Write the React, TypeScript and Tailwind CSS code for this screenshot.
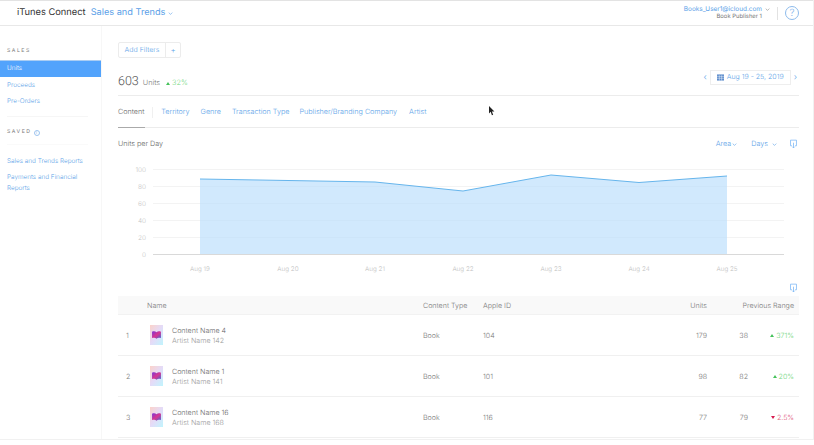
import React from "react";

const Chevron = ({ className = "" }: { className?: string }) => (
  <svg viewBox="0 0 8 5" className={className} fill="none" stroke="currentColor" strokeWidth="1">
    <path d="M1 1l3 3 3-3" />
  </svg>
);

const ExportIcon = () => (
  <svg viewBox="0 0 8 10" className="w-[7px] h-[10px] text-[#7db7f5]" fill="none" stroke="currentColor" strokeWidth="0.9">
    <path d="M2.2 7H.6V.6h6.8V7H5.8" />
    <path d="M4 3.5v6M2.6 8l1.4 1.5L5.4 8" />
  </svg>
);

const Tri = ({ up }: { up: boolean }) => (
  <svg viewBox="0 0 4 3" className={`inline-block w-[4px] h-[3px] mr-[2px] ${up ? "text-[#45c25a]" : "text-[#d81b4f]"}`}>
    <path d={up ? "M2 0l2 3H0z" : "M0 0h4L2 3z"} fill="currentColor" />
  </svg>
);

const Thumb = () => (
  <div className="w-[13px] h-[20px] -mt-[2px] shrink-0 flex items-center justify-center bg-gradient-to-br from-[#fbd2ca] via-[#e4dbf8] to-[#bff5fd]">
    <svg viewBox="0 0 10 9" className="w-[9px] h-[8px]">
      <defs>
        <linearGradient id="bk" x1="0" y1="0" x2="1" y2="1">
          <stop offset="0" stopColor="#7a35d8" />
          <stop offset="0.5" stopColor="#d9358f" />
          <stop offset="1" stopColor="#3f63d8" />
        </linearGradient>
      </defs>
      <path d="M0 .8C2 0 3.8.3 5 1.4 6.2.3 8 0 10 .8V8C8 7.2 6.2 7.4 5 8.8 3.8 7.4 2 7.2 0 8z" fill="url(#bk)" />
    </svg>
  </div>
);

const rows = [
  { n: 1, name: "Content Name 4", artist: "Artist Name 142", id: "104", units: "179", prev: "38", pct: "371%", up: true },
  { n: 2, name: "Content Name 1", artist: "Artist Name 141", id: "101", units: "98", prev: "82", pct: "20%", up: true },
  { n: 3, name: "Content Name 16", artist: "Artist Name 168", id: "116", units: "77", prev: "79", pct: "2.5%", up: false },
];

const xs = [200, 288, 375, 463, 551, 639, 727];
const ys = [179, 180.5, 182, 191, 175, 182.5, 176];
const days = ["Aug 19", "Aug 20", "Aug 21", "Aug 22", "Aug 23", "Aug 24", "Aug 25"];
const line = xs.map((x, i) => `${x - 118},${ys[i] - 155}`).join(" ");

const Chart = () => (
  <svg width="681" height="125" viewBox="0 0 681 125" className="block" style={{ fontFamily: "Inter, sans-serif" }}>
    {[0, 1, 2, 3, 4, 5].map((i) => (
      <g key={i}>
        <line x1="35" x2="666" y1={14.5 + i * 17} y2={14.5 + i * 17} stroke={i === 5 ? "#d9d9d9" : "#f3f3f3"} />
        <text x="28" y={17 + i * 17} textAnchor="end" fontSize="6.5" fill="#c4c4c4" fontWeight="300">
          {100 - i * 20}
        </text>
      </g>
    ))}
    <polygon points={`82,99 ${line} 609,99`} fill="#b5dbfb" fillOpacity="0.62" />
    <polyline points={line} fill="none" stroke="#66b5ec" strokeWidth="1" />
    {xs.map((x, i) => (
      <text key={x} x={x - 118} y="116" textAnchor="middle" fontSize="6.3" fill="#bdbdbd" fontWeight="300">
        {days[i]}
      </text>
    ))}
  </svg>
);

export default function App() {
  return (
    <div className="w-[814px] h-[445px] overflow-hidden bg-white">
      <div className="relative w-[814px] h-[440px] overflow-hidden border-r border-b border-[#f1f1f1] font-['Inter',sans-serif] font-light text-[#666] [text-rendering:geometricPrecision]">
        <header className="h-[26px] flex items-center border-t border-t-[#e3e3e3] border-b border-b-[#e8e8e8] pl-[17px] pr-[14px]">
          <span className="text-[9.3px] font-normal text-[#333]">iTunes Connect</span>
          <span className="ml-[5px] text-[9.2px] font-normal text-[#5b9fe8]">Sales and Trends</span>
          <Chevron className="ml-[3px] w-[5px] h-[3px] text-[#5b9fe8]" />
          <div className="ml-auto flex flex-col items-end leading-[8px]">
            <span className="text-[6.45px] text-[#5b9fe8] font-normal">Books_User1@icloud.com</span>
            <span className="text-[5.85px] text-[#777] font-normal">Book Publisher 1</span>
          </div>
          <Chevron className="ml-[3px] mb-[7px] w-[5px] h-[3px] text-[#888]" />
          <div className="ml-[7px] w-px h-[13px] bg-[#e2e2e2]" />
          <div className="ml-[7px] w-[14px] h-[14px] rounded-full border border-[#8dbbec] text-[#7cb0ea] text-[10px] flex items-center justify-center">?</div>
        </header>

        <div className="flex h-[413px]">
          <aside className="w-[102px] shrink-0 border-r border-r-[#f7f7f7] pt-[22px] text-[6.4px]">
            <div className="pl-[7px] text-[5.2px] tracking-[1.5px] leading-[7px] text-[#777] font-normal">SALES</div>
            <div className="mt-[5px] h-[17px] pl-[7px] flex items-center bg-[#52a3fc] border-t border-t-[#aacdf3] text-white">Units</div>
            <div className="pl-[7px] pt-[1px] h-[16px] flex items-center text-[#5b9fe8]">Proceeds</div>
            <div className="pl-[7px] pt-[1px] h-[16px] flex items-center text-[#5b9fe8]">Pre-Orders</div>
            <div className="mt-[7px] ml-[7px] w-[81px] border-t border-t-[#f6f6f6]" />
            <div className="mt-[12px] pl-[7px] flex items-center text-[5.2px] tracking-[1.5px] leading-[7px] text-[#777] font-normal">
              SAVED
              <span className="ml-[2px] w-[6px] h-[6px] rounded-full border border-[#9cc4ef] text-[#7db1ea] text-[4px] tracking-normal flex items-center justify-center">i</span>
            </div>
            <div className="mt-[8px] ml-[7px] w-[81px] border-t border-t-[#fafafa]" />
            <div className="mt-[11px] pl-[7px] h-[10px] leading-[10px] text-[#5b9fe8]">Sales and Trends Reports</div>
            <div className="mt-[6px] pl-[7px] pr-[10px] leading-[11px] text-[#5b9fe8]">
              Payments and Financial Reports
            </div>
          </aside>

          <main className="w-[681px] ml-[16px] pt-[16px]">
            <div className="w-[63px] h-[16px] flex items-center border border-[#ececec] rounded-[2px] text-[#5b9fe8] text-[7px]">
              <span className="w-[47px] text-center border-r border-r-[#ececec] leading-[14px]">Add Filters</span>
              <span className="flex-1 text-center text-[8px] leading-[14px]">+</span>
            </div>

            <div className="mt-[12px] h-[25px] flex items-center">
              <span className="text-[12.5px] font-['Roboto',sans-serif] text-[#555]">603</span>
              <span className="ml-[4px] mt-[1px] text-[7.3px] text-[#777]">Units</span>
              <span className="ml-[6px] mt-[1px] text-[7.3px] text-[#6fd67c] flex items-center"><Tri up />32%</span>
              <div className="ml-auto mr-[2px] -mt-[10px] flex items-center text-[#5b9fe8]">
                <span className="text-[9px] mr-[3px]">‹</span>
                <div className="w-[81px] h-[15px] border border-[#eeeeee] flex items-center pl-[6px] text-[7px] whitespace-nowrap">
                  <svg viewBox="0 0 8 7" className="w-[7px] h-[7px] mr-[3px] text-[#3f78c4]">
                    <path d="M0 0h8v7H0z" fill="currentColor" opacity=".85" />
                    <path d="M0 2.2h8M0 4.4h8M2.7 1v6M5.3 1v6" stroke="#fff" strokeWidth=".5" />
                  </svg>
                  Aug 19 - 25, 2019
                </div>
                <span className="text-[9px] ml-[3px]">›</span>
              </div>
            </div>

            <div className="h-[33px] pt-[2px] flex items-center text-[7.2px] text-[#5b9fe8] border-t border-t-[#ececec] border-b border-b-[#ececec] relative">
              <span className="text-[#666]">Content</span>
              <span className="mx-[8px] w-px h-[11px] bg-[#f0f0f0]" />
              <span>Territory</span>
              <span className="ml-[11px]">Genre</span>
              <span className="ml-[11px]">Transaction Type</span>
              <span className="ml-[10px]">Publisher/Branding Company</span>
              <span className="ml-[12px]">Artist</span>
              <span className="absolute left-0 -bottom-px w-[27px] h-[1px] bg-[#aaa]" />
            </div>

            <div className="mt-[11px] h-[10px] flex items-center text-[7.2px]">
              <span className="text-[#666]">Units per Day</span>
              <div className="ml-auto flex items-center text-[#5b9fe8]">
                Area
                <Chevron className="ml-[1px] w-[5px] h-[3px]" />
                <span className="ml-[14px]">Days</span>
                <Chevron className="ml-[4px] w-[5px] h-[3px]" />
                <span className="ml-[13px] mr-[2px]"><ExportIcon /></span>
              </div>
            </div>

            <div className="mt-[6px]"><Chart /></div>

            <div className="mt-[3px] h-[10px] flex justify-end pr-[2px]"><ExportIcon /></div>

            <div className="mt-[3px] h-[19px] pt-[2px] flex items-center bg-[#f9f9f9] border-b border-b-[#f2f2f2] text-[7.1px] text-[#777]">
              <span className="w-[305px] pl-[29px]">Name</span>
              <span className="w-[60px]">Content Type</span>
              <span className="w-[150px]">Apple ID</span>
              <span className="w-[74px] text-right">Units</span>
              <span className="flex-1 text-right pr-[5px]">Previous Range</span>
            </div>
            {rows.map((r) => (
              <div key={r.n} className="h-[41px] pt-[2px] flex items-center border-b border-b-[#f0f0f0] text-[7.1px] text-[#777]">
                <span className="w-[32px] pl-[8px]">{r.n}</span>
                <Thumb />
                <div className="w-[251px] ml-[9px] leading-[10px]">
                  <div className="text-[#666]">{r.name}</div>
                  <div className="text-[#999]">{r.artist}</div>
                </div>
                <span className="w-[60px]">Book</span>
                <span className="w-[150px]">{r.id}</span>
                <span className="w-[74px] text-right">{r.units}</span>
                <span className="w-[41px] text-right">{r.prev}</span>
                <span className={`flex-1 text-right pr-[5px] ${r.up ? "text-[#6fd67c]" : "text-[#e0577c]"}`}>
                  <Tri up={r.up} />{r.pct}
                </span>
              </div>
            ))}
          </main>
        </div>

        <svg viewBox="0 0 8 12" className="absolute left-[488px] top-[106px] w-[7px] h-[10px]">
          <path d="M1 0v9l2-2 1.5 4 1.5-.6L4.5 6.6H7.5z" fill="#222" />
        </svg>
      </div>
    </div>
  );
}
